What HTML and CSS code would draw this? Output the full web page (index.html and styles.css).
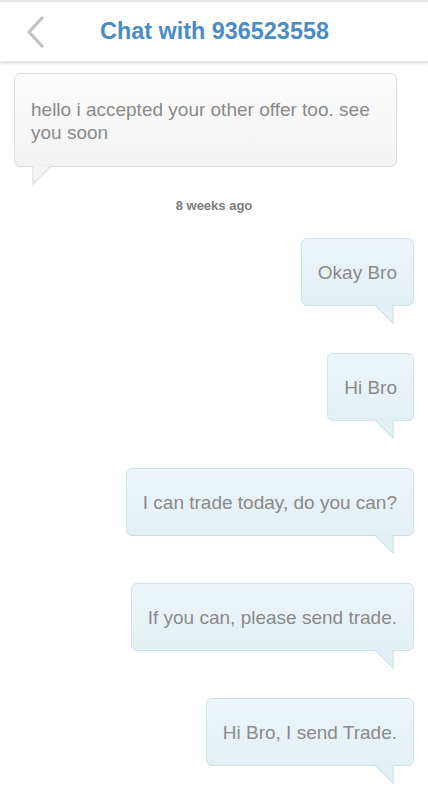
FILE: index.html
```html
<!DOCTYPE html>
<html>
<head>
<meta charset="utf-8">
<link rel="stylesheet" href="styles.css">
</head>
<body>
<div class="app">
  <header class="header">
    <svg class="back" width="20" height="32" viewBox="0 0 20 32"><polyline points="16,2 3,16 16,30" fill="none" stroke="#c2c2c2" stroke-width="3.2" stroke-linecap="round" stroke-linejoin="round"/></svg>
    <h1 class="title">Chat with 936523558</h1>
  </header>
  <main class="messages">
    <div class="row row-in">
      <div class="bubble bubble-in">hello i accepted your other offer too. see you soon
        <svg class="tail tail-in" width="24" height="22" viewBox="0 0 24 22"><polygon points="4,0 23,0 4,19" fill="#f4f4f4" stroke="#dcdcdc" stroke-width="1.2"/><rect x="3" y="-2" width="21" height="2.6" fill="#f4f4f4"/></svg>
      </div>
    </div>
    <div class="time">8 weeks ago</div>
    <div class="row row-out">
      <div class="bubble bubble-out">Okay Bro
        <svg class="tail tail-out" width="24" height="22" viewBox="0 0 24 22"><polygon points="20,0 1,0 20,19" fill="#e4f1f4" stroke="#cfe2e7" stroke-width="1.2"/><rect x="0" y="-2" width="21" height="2.6" fill="#e4f1f4"/></svg>
      </div>
    </div>
    <div class="row row-out">
      <div class="bubble bubble-out">Hi Bro
        <svg class="tail tail-out" width="24" height="22" viewBox="0 0 24 22"><polygon points="20,0 1,0 20,19" fill="#e4f1f4" stroke="#cfe2e7" stroke-width="1.2"/><rect x="0" y="-2" width="21" height="2.6" fill="#e4f1f4"/></svg>
      </div>
    </div>
    <div class="row row-out">
      <div class="bubble bubble-out">I can trade today, do you can?
        <svg class="tail tail-out" width="24" height="22" viewBox="0 0 24 22"><polygon points="20,0 1,0 20,19" fill="#e4f1f4" stroke="#cfe2e7" stroke-width="1.2"/><rect x="0" y="-2" width="21" height="2.6" fill="#e4f1f4"/></svg>
      </div>
    </div>
    <div class="row row-out">
      <div class="bubble bubble-out">If you can, please send trade.
        <svg class="tail tail-out" width="24" height="22" viewBox="0 0 24 22"><polygon points="20,0 1,0 20,19" fill="#e4f1f4" stroke="#cfe2e7" stroke-width="1.2"/><rect x="0" y="-2" width="21" height="2.6" fill="#e4f1f4"/></svg>
      </div>
    </div>
    <div class="row row-out">
      <div class="bubble bubble-out">Hi Bro, I send Trade.
        <svg class="tail tail-out" width="24" height="22" viewBox="0 0 24 22"><polygon points="20,0 1,0 20,19" fill="#e4f1f4" stroke="#cfe2e7" stroke-width="1.2"/><rect x="0" y="-2" width="21" height="2.6" fill="#e4f1f4"/></svg>
      </div>
    </div>
  </main>
  <footer class="footer"></footer>
</div>
</body>
</html>
```

FILE: styles.css
```css
* { box-sizing: border-box; }
html, body { margin: 0; padding: 0; background: #fff; }
body { font-family: "Liberation Sans", Arial, sans-serif; width: 428px; height: 800px; overflow: hidden; }
.app { display: flex; flex-direction: column; height: 800px; }
.header {
  height: 62px;
  flex: none;
  display: flex;
  align-items: center;
  justify-content: center;
  position: relative;
  border-top: 2px solid #e6e6e6;
  background: #fff;
  box-shadow: 0 1px 3px rgba(0,0,0,0.18);
  border-bottom: 1px solid #e4e4e4;
  z-index: 2;
}
.back { position: absolute; left: 26px; top: 14px; }
.title {
  margin: 0;
  font-size: 23.4px;
  font-weight: bold;
  color: #4a8cc3;
  padding-left: 1px;
}
.messages {
  flex: 1;
  display: flex;
  flex-direction: column;
  padding: 11px 14px 0 14px;
}
.row { display: flex; }
.row-in { justify-content: flex-start; }
.row-out { justify-content: flex-end; margin-bottom: 47px; }
.bubble {
  position: relative;
  font-size: 19px;
  line-height: 23px;
  color: #8a8a8a;
  border-radius: 6px;
}
.bubble-in {
  width: 383px;
  padding: 24px 16px 22px 16px;
  background: linear-gradient(#fdfdfd, #f3f3f3);
  border: 1px solid #dcdcdc;
}
.bubble-out {
  height: 68px;
  padding: 22px 16px;
  background: linear-gradient(#ebf7fa, #e3f0f4);
  border: 1px solid #cfe2e7;
  white-space: nowrap;
}
.tail { position: absolute; top: 100%; margin-top: -1px; }
.tail-in { left: 14px; }
.tail-out { right: 16px; }
.time {
  text-align: center;
  font-size: 13px;
  font-weight: bold;
  color: #7c7c7c;
  margin: 32px 0 25px;
  line-height: 14px;
}
.footer {
  height: 6px;
  flex: none;
  margin-top: auto;
  background: linear-gradient(#f0f0f0, #d8d8d8);
}
```
